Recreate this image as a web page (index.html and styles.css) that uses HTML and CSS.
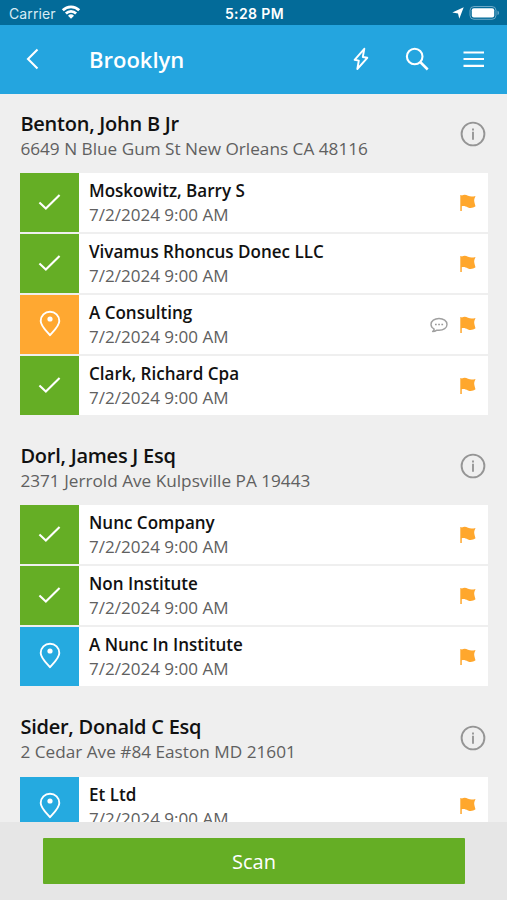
FILE: index.html
```html
<!DOCTYPE html>
<html lang="en">
<head>
<meta charset="utf-8">
<title>Brooklyn</title>
<link rel="stylesheet" href="styles.css">
</head>
<body>
<svg class="defs" aria-hidden="true">
  <symbol id="check" viewBox="0 0 24 24"><path d="M1.500 12.500 8.200 18.800 22.500 4.800" fill="none" stroke="#fff" stroke-width="2.200"/></symbol>
  <symbol id="pin" viewBox="0 0 24 28"><path d="M12 25.200C10.500 23 2.700 16.500 2.700 11a9.300 9.300 0 0 1 18.600 0C21.300 16.500 13.500 23 12 25.200Z" fill="none" stroke="#fff" stroke-width="1.900" stroke-linejoin="round"/><circle cx="12" cy="9" r="2.600" fill="#fff"/></symbol>
  <symbol id="flag" viewBox="0 0 16 18"><path d="M.3 1.200C1 .6 1.500 1.300 1.800 1.400 4.500.2 6 .7 8 1.800c2.300 1 4.500.9 7.500.2-.8 2-1.400 3.300-1.300 4.700.1 1.700.7 3.200 1.300 5.500-2.500 1.900-5 2.100-7.500 1.200-2.300-.9-4-1.700-6.200-1.100V17H.3Z" fill="#ffa72d"/></symbol>
  <symbol id="info" viewBox="0 0 26 26"><circle cx="13" cy="13" r="11.400" fill="none" stroke="#959595" stroke-width="1.900"/><path d="M13 7.500v2M13 10.800v7.900" stroke="#8c8c8c" stroke-width="1.700"/></symbol>
  <symbol id="chat" viewBox="0 0 18 16"><path d="M4.200 12C2.300 10.900 1 9.400 1 7.400 1 4 4.500 1.500 9 1.500s8 2.500 8 5.900-3.500 5.900-8 5.900c-.8 0-1.400-.1-2.100-.2-1.300 1-2.600 1.500-4.300 1.500C3.600 13.800 4 13 4.200 12Z" fill="none" stroke="#a0a0a0" stroke-width="1.400" stroke-linejoin="round"/><path d="M5 7.500h1.700M8.200 7.500h1.700M11.400 7.500h1.700" stroke="#999" stroke-width="1.700"/></symbol>
</svg>
<div class="app">
  <div class="status">
    <div class="carrier">Carrier
      <svg width="20" height="16" viewBox="0 0 20 16" fill="none" stroke="#fff" stroke-width="2.700"><path d="M1.800 6.200a11.600 11.600 0 0 1 16.400 0M4.900 9.500a7.200 7.200 0 0 1 10.200 0"/><path d="M10 14.800 7 11.700a4.300 4.300 0 0 1 6 0Z" fill="#fff" stroke="none"/></svg>
    </div>
    <div class="time">5:28 PM</div>
    <div class="power">
      <svg width="12" height="12" viewBox="0 0 12 12"><path d="M11.700.3 7.300 11.700 6 6.500.3 5.500Z" fill="#fff"/></svg>
      <svg width="31" height="16" viewBox="0 0 31 16"><rect x="1" y="1.500" width="26" height="12.800" rx="4" fill="none" stroke="#6ba8c6" stroke-width="1"/><rect x="2.800" y="3.300" width="22.400" height="9.200" rx="2" fill="#fff"/><path d="M28.500 5.700c2 .5 2 3.900 0 4.400Z" fill="#6ba8c6"/></svg>
    </div>
  </div>
  <header class="bar">
    <svg class="back" width="14" height="22" viewBox="0 0 14 22"><path d="M11.500 1.500 2 11l9.500 9.500" fill="none" stroke="#fff" stroke-width="2.100"/></svg>
    <h1>Brooklyn</h1>
    <div class="tools">
      <svg width="16" height="24" viewBox="0 0 16 24"><path d="M11.300 1.800 1.600 12.800 5.800 13.600 4.300 22 14.300 10.800 9.800 10Z" fill="none" stroke="#fff" stroke-width="1.900" stroke-linejoin="round"/></svg>
      <svg width="24" height="24" viewBox="0 0 24 24" fill="none" stroke="#fff" stroke-width="2.100"><circle cx="9.700" cy="9.500" r="7.800"/><path d="m15.200 15 7.500 7.500" stroke-width="2.500"/></svg>
      <svg width="22" height="18" viewBox="0 0 22 18"><path d="M.5 2.500h20.500M.5 9h20.500M.5 15.800h20.500" stroke="#fff" stroke-width="2.200"/></svg>
    </div>
  </header>
  <main>
    <section>
      <div class="head"><div><h2>Benton, John B Jr</h2><p>6649 N Blue Gum St New Orleans CA 48116</p></div><svg class="info"><use href="#info"/></svg></div>
      <ul>
        <li><span class="tile green"><svg class="check"><use href="#check"/></svg></span><div class="text"><h3>Moskowitz, Barry S</h3><p>7/2/2024 9:00 AM</p></div><svg class="flag"><use href="#flag"/></svg></li>
        <li><span class="tile green"><svg class="check"><use href="#check"/></svg></span><div class="text"><h3>Vivamus Rhoncus Donec LLC</h3><p>7/2/2024 9:00 AM</p></div><svg class="flag"><use href="#flag"/></svg></li>
        <li><span class="tile orange"><svg class="pin"><use href="#pin"/></svg></span><div class="text"><h3>A Consulting</h3><p>7/2/2024 9:00 AM</p></div><svg class="chat"><use href="#chat"/></svg><svg class="flag"><use href="#flag"/></svg></li>
        <li><span class="tile green"><svg class="check"><use href="#check"/></svg></span><div class="text"><h3>Clark, Richard Cpa</h3><p>7/2/2024 9:00 AM</p></div><svg class="flag"><use href="#flag"/></svg></li>
      </ul>
    </section>
    <section>
      <div class="head"><div><h2>Dorl, James J Esq</h2><p>2371 Jerrold Ave Kulpsville PA 19443</p></div><svg class="info"><use href="#info"/></svg></div>
      <ul>
        <li><span class="tile green"><svg class="check"><use href="#check"/></svg></span><div class="text"><h3>Nunc Company</h3><p>7/2/2024 9:00 AM</p></div><svg class="flag"><use href="#flag"/></svg></li>
        <li><span class="tile green"><svg class="check"><use href="#check"/></svg></span><div class="text"><h3>Non Institute</h3><p>7/2/2024 9:00 AM</p></div><svg class="flag"><use href="#flag"/></svg></li>
        <li><span class="tile blue"><svg class="pin"><use href="#pin"/></svg></span><div class="text"><h3>A Nunc In Institute</h3><p>7/2/2024 9:00 AM</p></div><svg class="flag"><use href="#flag"/></svg></li>
      </ul>
    </section>
    <section>
      <div class="head"><div><h2>Sider, Donald C Esq</h2><p>2 Cedar Ave #84 Easton MD 21601</p></div><svg class="info"><use href="#info"/></svg></div>
      <ul>
        <li><span class="tile blue"><svg class="pin"><use href="#pin"/></svg></span><div class="text"><h3>Et Ltd</h3><p>7/2/2024 9:00 AM</p></div><svg class="flag"><use href="#flag"/></svg></li>
      </ul>
    </section>
  </main>
  <footer><button>Scan</button></footer>
</div>
</body>
</html>
```
FILE: styles.css
```css
* { box-sizing: border-box; margin: 0; padding: 0; }
body { font-family: "Open Sans", "Noto Sans", sans-serif; background: #efefef; }
.defs { position: absolute; width: 0; height: 0; }
svg { display: block; flex: none; }
.app { display: flex; flex-direction: column; height: 900px; overflow: hidden; }
.status {
  flex: none; height: 25px; padding: 2px 7px 0 9px;
  display: grid; grid-template-columns: 1fr auto 1fr; align-items: center;
  background: #036b99; color: #fff;
  font-family: Inter, "Liberation Sans", sans-serif; font-size: 14px; line-height: 22px;
}
.carrier { display: flex; align-items: center; gap: 5px; color: #d8ebf4; letter-spacing: .1px; }
.carrier svg { margin-top: -3px; }
.time { font-weight: 600; letter-spacing: .4px; }
.power { display: flex; justify-content: flex-end; align-items: center; gap: 5px; margin-top: -2px; }
.bar {
  flex: none; height: 69px; padding: 0 22px 2px 26px;
  display: flex; align-items: center; background: #24a5df; color: #fff;
}
.bar h1 { margin-left: 49px; font-size: 22px; font-weight: 600; line-height: 30px; flex: 1; }
.tools { display: flex; align-items: center; gap: 34px; }
.tools svg:nth-child(2) { margin-left: 2px; }
main { flex: 1; min-height: 0; overflow: hidden; padding: 0 19.500px 0 20.400px; }
section { margin-bottom: 11.250px; }
.head { height: 79px; padding: 15.600px 2px 0 0; display: flex; justify-content: space-between; }
h2 { font-size: 20px; line-height: 28px; font-weight: 600; letter-spacing: -.24px; color: #111; white-space: nowrap; }
.head p { font-size: 17.200px; line-height: 22px; color: #606060; white-space: nowrap; }
.info { width: 26px; height: 26px; margin-top: 11.500px; }
ul { list-style: none; display: flex; flex-direction: column; gap: 2px; }
li { height: 59px; display: flex; align-items: center; padding-right: 12px; background: #fff; }
.tile { width: 58.600px; height: 59px; display: flex; align-items: center; justify-content: center; }
.green { background: #65ae25; }
.orange { background: #ffa831; }
.blue { background: #25aae0; }
.check { width: 23px; height: 24px; margin-top: -1px; }
.pin { width: 24px; height: 28px; margin-top: -1px; }
.text { flex: 1; margin-left: 10px; padding-top: 1px; }
h3 { font-size: 17.050px; line-height: 24px; font-weight: 600; color: #111; }
.text p { font-size: 17.050px; line-height: 24px; color: #606060; }
.flag { width: 16px; height: 18px; }
.chat { width: 18px; height: 16px; margin-right: 12px; }
footer { flex: none; height: 78px; padding: 16px 42px 0 43px; background: #e6e6e6; }
button { display: block; width: 100%; height: 46px; border: 0; border-radius: 1px; background: #65ae25; color: #fff; font: 20px "Open Sans", sans-serif; }
```
